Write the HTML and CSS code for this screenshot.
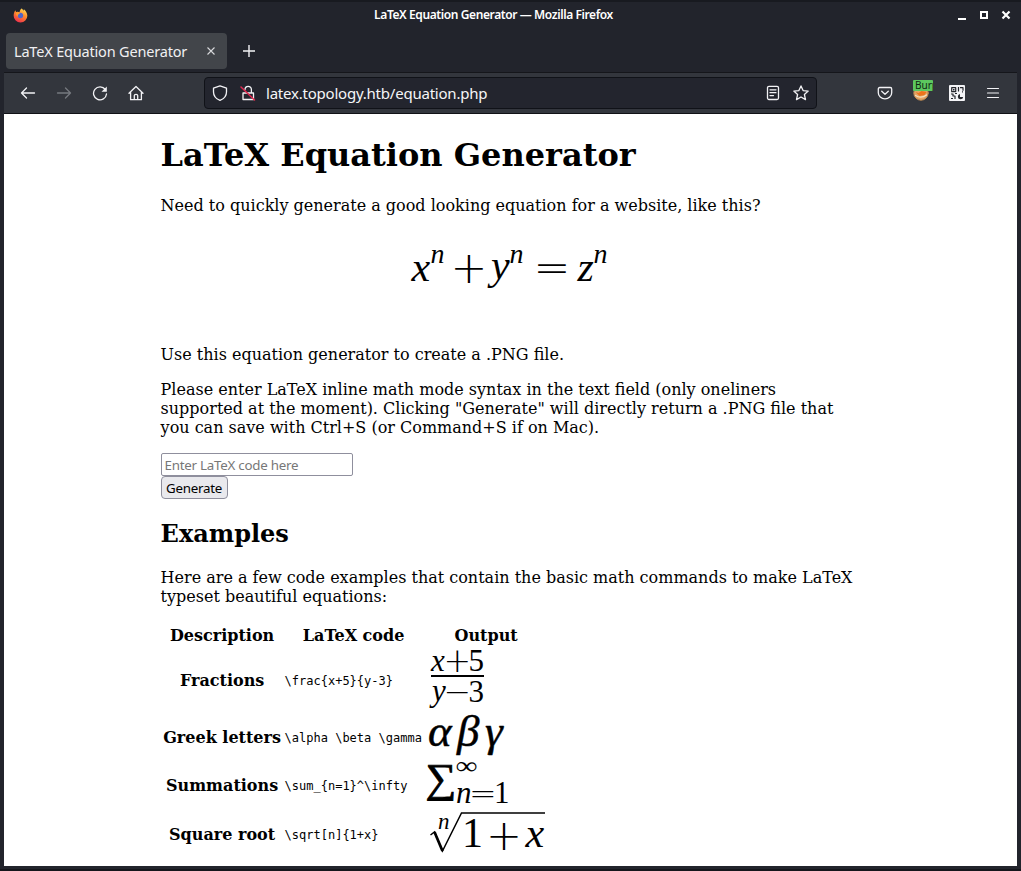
FILE: index.html
```html
<!DOCTYPE html>
<html lang="en">
<head>
<meta charset="utf-8">
<title>LaTeX Equation Generator</title>
<link rel="stylesheet" href="styles.css">
</head>
<body>
<div class="window">
  <header class="titlebar">
    <svg class="fox" viewBox="0 0 16 16">
      <defs>
        <linearGradient id="fire" x1="0.8" y1="0" x2="0.3" y2="1"><stop offset="0" stop-color="#ffe35a"/><stop offset=".45" stop-color="#ff8a2c"/><stop offset="1" stop-color="#ee2d4e"/></linearGradient>
      </defs>
      <path fill="url(#fire)" d="M9.3.6c1 .6 1.3 1.5 1.5 2.3.6-.5.8-1 .8-1.7 1.4 1.2 3.7 3.800 3.700 7A7.200 7.200 0 0 1 8 15.400 7.200 7.200 0 0 1 .7 8.200C.7 5.800 1.600 4 2.600 2.500c.1.900.4 1.400.9 1.900C5 3.800 6 4.200 7 4.500 7.300 2.800 8 1.300 9.300.6z"/>
      <circle cx="7.900" cy="8" r="2.900" fill="#4f66c9"/>
      <path fill="#ff9a2e" d="M3.300 4.600c1.700-.5 3.200.1 4 1.300-.4.900-1.600.9-2 1.300-.3.800-.2 1.500.3 2.100-2-.6-2.800-2.600-2.300-4.700z"/>
    </svg>
    <div class="window-title">LaTeX Equation Generator — Mozilla Firefox</div>
    <svg class="window-buttons" viewBox="0 0 54 14" fill="none" stroke="#fff">
      <path stroke-width="2" d="M0 11h8M23 4h6v6h-6z"/><path stroke-width="2.200" d="M44.500 3.500l7 7M51.500 3.500l-7 7"/>
    </svg>
  </header>
  <nav class="tabs">
    <div class="tab"><span class="tab-name">LaTeX Equation Generator</span>
      <svg class="tab-close" viewBox="0 0 8 8"><path d="M.5.5l7 7M7.500.5l-7 7" stroke="#d8d9dc" stroke-width="1.100"/></svg>
    </div>
    <svg class="new-tab" viewBox="0 0 12 12"><path d="M6 0v12M0 6h12" stroke="#f3f3f5" stroke-width="1.400"/></svg>
  </nav>
  <div class="toolbar">
    <div class="nav-icons">
      <svg viewBox="0 0 16 16"><path d="M14.500 8H1.500M6.500 3L1.500 8l5 5"/></svg>
      <svg class="disabled" viewBox="0 0 16 16"><path d="M1.500 8h13M9.500 3l5 5-5 5"/></svg>
      <svg viewBox="0 0 16 16"><path d="M13.300 4.500A6.500 6.500 0 1 0 14.500 9"/><path class="solid" d="M14.800 1.500v5.300H9.500z"/></svg>
      <svg viewBox="0 0 16 16"><path d="M1 8.300L8 1.500l7 6.800M2.600 7v7.700h10.800V7M6.300 14.500v-4q0-1.200 1.700-1.200t1.700 1.200v4"/></svg>
    </div>
    <div class="urlbar">
      <svg viewBox="0 0 16 16"><path d="M8 .8l6.500 2.300v3.800c0 4-3 7-6.500 8.500C4.500 13.900 1.500 10.900 1.500 6.900V3.100z"/></svg>
      <svg viewBox="0 0 16 16"><path d="M5 4.500a3.200 3.200 0 0 1 6.400 0V7.500M3 8h10.500v6.500H3z"/><path class="strike" d="M1 2l13.500 13"/></svg>
      <span class="url">latex.topology.htb/equation.php</span>
      <svg viewBox="0 0 16 16"><rect x="2.500" y="1.300" width="11" height="13.200" rx="1.500"/><path d="M5 4.800h6M5 7.700h6M5 10.600h3.500"/></svg>
      <svg viewBox="0 0 16 16"><path d="M8 .9l2.100 4.700 5.100.5-3.800 3.400 1.100 5.100L8 12l-4.500 2.600 1.100-5.100L.8 6.100l5.100-.5z"/></svg>
    </div>
    <div class="extensions">
      <svg viewBox="0 0 16 16"><path d="M2.800 2.500h10.400q1.500 0 1.500 1.500v3.700a6.700 6.200 0 0 1-13.400 0V4q0-1.500 1.500-1.500zM4.700 6.200L8 9.300l3.300-3.100"/></svg>
      <div class="burp">
        <svg viewBox="0 0 16 16"><circle cx="8" cy="8" r="7.200" class="bun"/><path class="face" d="M2.500 7l3 1 3-2 5 1-2 3-5 1z"/><path class="smile" d="M2.500 10.500q5.500 3.500 11-.5"/></svg>
        <span class="burp-label">Burp</span>
      </div>
      <svg class="qr" viewBox="0 0 16 16"><rect class="qr-bg" width="16" height="16" rx="1"/><path class="qr-line" d="M2.700 2.700h4v4h-4zM9.500 2v4.500M11 2.700h3v3M2 9h2v2h2v3M2 13.500h2M6 8.500h2M13 6.800h1"/><path class="qr-fill" d="M4 4h1.500v1.500H4zM11 9a2.700 2.700 0 1 0 3.200 3H11z"/></svg>
      <svg class="menu" viewBox="0 0 16 16"><path d="M2.500 3.500h11M2.500 8h11M2.500 12.500h11"/></svg>
    </div>
  </div>
  <main class="page">
    <div class="content">
      <h1>LaTeX Equation Generator</h1>
      <p>Need to quickly generate a good looking equation for a website, like this?</p>
      <svg class="hero math" viewBox="401 231 220 98">
        <g class="it" font-size="42"><text x="411.500" y="280.500">x</text><text x="491" y="279">y</text><text x="577.500" y="280.500">z</text></g>
        <g class="it" font-size="28"><text x="430.500" y="262.500">n</text><text x="509.500" y="262.500">n</text><text x="593.500" y="262.500">n</text></g>
        <g class="op" font-size="44"><text x="450.500" y="282.500">+</text><text x="533.500" y="282.500">=</text></g>
      </svg>
      <p class="intro">Use this equation generator to create a .PNG file.</p>
      <p>Please enter LaTeX inline math mode syntax in the text field (only oneliners supported at the moment). Clicking "Generate" will directly return a .PNG file that you can save with Ctrl+S (or Command+S if on Mac).</p>
      <form class="generator">
        <input class="code-input" type="text" placeholder="Enter LaTeX code here">
        <button class="submit" type="button">Generate</button>
      </form>
      <h2>Examples</h2>
      <p>Here are a few code examples that contain the basic math commands to make LaTeX typeset beautiful equations:</p>
      <div class="examples">
        <b>Description</b><b>LaTeX code</b><b>Output</b>
        <b>Fractions</b><code>\frac{x+5}{y-3}</code>
        <svg class="math" viewBox="426 648 121 64">
          <g class="it" font-size="31"><text x="431" y="670.500">x</text><text x="432" y="701">y</text></g>
          <g class="rm" font-size="31"><text x="468.500" y="670.500">5</text><text x="468.500" y="701.500">3</text></g>
          <g class="op" font-size="33"><text x="443.500" y="672">+</text><text x="443.500" y="703">−</text></g>
          <path d="M431 676h53" stroke-width="2"/>
        </svg>
        <b>Greek letters</b><code>\alpha \beta \gamma</code>
        <svg class="math" viewBox="426 714 121 46">
          <g class="it greek" font-size="45"><text x="428" y="746">α</text><text x="457" y="746">β</text><text x="485" y="746">γ</text></g>
        </svg>
        <b>Summations</b><code>\sum_{n=1}^\infty</code>
        <svg class="math" viewBox="426 762 121 46">
          <g class="rm"><text class="sum" transform="translate(425.500 791.500) scale(1.050 1)" font-size="41">∑</text><text transform="translate(455.500 773.500) scale(1 .8)" font-size="31">∞</text><text x="494" y="802.500" font-size="31">1</text></g>
          <text class="it" x="456" y="802.500" font-size="31">n</text><text class="op" x="469" y="804.500" font-size="33">=</text>
        </svg>
        <b>Square root</b><code>\sqrt[n]{1+x}</code>
        <svg class="math" viewBox="426 810 121 48">
          <text class="it" x="438" y="828.500" font-size="23">n</text>
          <path d="M430.500 835l4-3 8 19 19-38H545" stroke-width="1.500"/><path d="M434.500 832l8 19" stroke-width="2.700"/>
          <text class="rm" x="462" y="847" font-size="42">1</text><text class="op" x="486" y="849.500" font-size="43">+</text><text class="it" x="525.500" y="847" font-size="42">x</text>
        </svg>
      </div>
    </div>
  </main>
</div>
</body>
</html>
```
FILE: styles.css
```css
* { box-sizing: border-box; }
body { margin: 0; background: #22242c; }
svg { display: block; flex: none; }
.window {
  width: 1021px;
  height: 871px;
  padding: 0 4px;
  overflow: hidden;
  background: #22242c;
  border-top: 2px solid #181a20;
  border-bottom: 2px solid #15161c;
  font-family: "Noto Sans", sans-serif;
  display: flex;
  flex-direction: column;
}
.titlebar {
  height: 28px;
  flex: none;
  display: grid;
  grid-template-columns: 84px 1fr 84px;
  align-items: center;
  padding: 0 5px 2px 9px;
}
.fox { width: 15px; height: 15px; }
.window-title { color: #fff; font-size: 12px; font-weight: 600; text-align: center; letter-spacing: -0.4px; padding: 0 38px 2px 0; white-space: nowrap; }
.window-buttons { width: 54px; height: 14px; justify-self: end; }
.tabs { height: 42px; flex: none; display: flex; align-items: center; padding-left: 2px; }
.tab {
  width: 221px;
  height: 36px;
  border-radius: 4px;
  background: #42454a;
  display: flex;
  align-items: center;
  justify-content: space-between;
  padding: 0 12px 0 8px;
}
.tab-name { color: #f0f0f2; font-size: 14.5px; letter-spacing: -0.18px; white-space: nowrap; }
.tab-close { width: 8px; height: 8px; }
.new-tab { width: 12px; height: 12px; margin-left: 16px; }
.toolbar {
  height: 42px;
  flex: none;
  background: #33363d;
  border-top: 1px solid #15161b;
  border-bottom: 1px solid #101116;
  display: flex;
  align-items: center;
}
.toolbar svg { width: 16px; height: 16px; fill: none; stroke: #f2f2f5; stroke-width: 1.3; stroke-linejoin: round; stroke-linecap: round; }
.toolbar .disabled { stroke: #76797f; }
.toolbar .solid { fill: #f2f2f5; stroke: none; }
.toolbar .strike { stroke: #e22850; stroke-width: 1.5; }
.toolbar .menu { stroke-width: 1.2; }
.nav-icons { width: 200px; display: flex; gap: 20px; padding-left: 16px; }
.urlbar {
  width: 613px;
  height: 32px;
  background: #23252e;
  border: 1px solid #101218;
  border-radius: 4px;
  display: flex;
  align-items: center;
  gap: 12px;
  padding: 0 7px;
}
.url { color: #f5f5f7; font-size: 15px; letter-spacing: -0.22px; flex: 1; margin-left: -2px; white-space: nowrap; }
.extensions { display: flex; align-items: center; gap: 20px; padding-left: 60px; }
.burp { position: relative; width: 16px; height: 16px; }
.burp .bun { fill: #e3a566; stroke: #c48d53; stroke-width: 1; }
.burp .face { fill: #ed741b; stroke: none; }
.burp .smile { stroke: #f7e0bd; }
.burp-label {
  position: absolute;
  left: 0;
  top: -5px;
  width: 20px;
  height: 11px;
  overflow: hidden;
  border-radius: 1px;
  background: #5cc85f;
  color: #102712;
  font-size: 10px;
  line-height: 11px;
  padding-left: 2px;
}
.toolbar .qr-bg { fill: #f4f4f7; stroke: none; }
.toolbar .qr-line { stroke: #24262c; stroke-width: 1.2; stroke-linecap: butt; }
.toolbar .qr-fill { fill: #24262c; stroke: none; }
.page { height: 752px; flex: none; background: #fff; color: #000; overflow: hidden; font: 16px/19px "DejaVu Serif", serif; }
.content { width: 700px; margin-left: 156.6px; }
h1 { font-size: 32px; line-height: 38px; margin: 22px 0; }
h2 { font-size: 24px; line-height: 28px; margin: 21px 0 20px; }
p { margin: 0 0 16px; }
.hero { width: 220px; height: 98px; margin: 0 auto 16px; }
.math .it { font-family: "Liberation Serif", serif; font-style: italic; }
.math .rm { font-family: "Liberation Serif", serif; }
.math .op { font-family: "DejaVu Sans Light", "DejaVu Sans", sans-serif; font-weight: 200; }
.math .greek { stroke: #000; stroke-width: 0.5; }
.math .sum { stroke: #000; stroke-width: 0.9; }
.math path { fill: none; stroke: #000; }
.generator { display: flex; flex-direction: column; align-items: flex-start; }
.code-input, .submit { height: 23px; border: 1px solid #8f8f9d; font: 13.33px "Noto Sans", sans-serif; letter-spacing: -0.25px; }
.code-input { width: 192px; border-radius: 2px; padding: 0 3px; background: #fff; }
.code-input::placeholder { color: #777; }
.submit { width: 67px; border-radius: 4px; padding: 0; background: #e9e9ed; color: #000; }
.examples {
  display: grid;
  grid-template-columns: 119px 140px 121px;
  grid-template-rows: 22px 64px 46px 46px 48px;
  gap: 2px;
  padding: 2px;
  align-items: center;
}
.examples b { text-align: center; white-space: nowrap; }
.examples code { font: 12px "DejaVu Sans Mono", monospace; padding: 2px 0 0 1px; white-space: nowrap; }
.examples svg { width: 121px; height: 100%; overflow: visible; }
```
